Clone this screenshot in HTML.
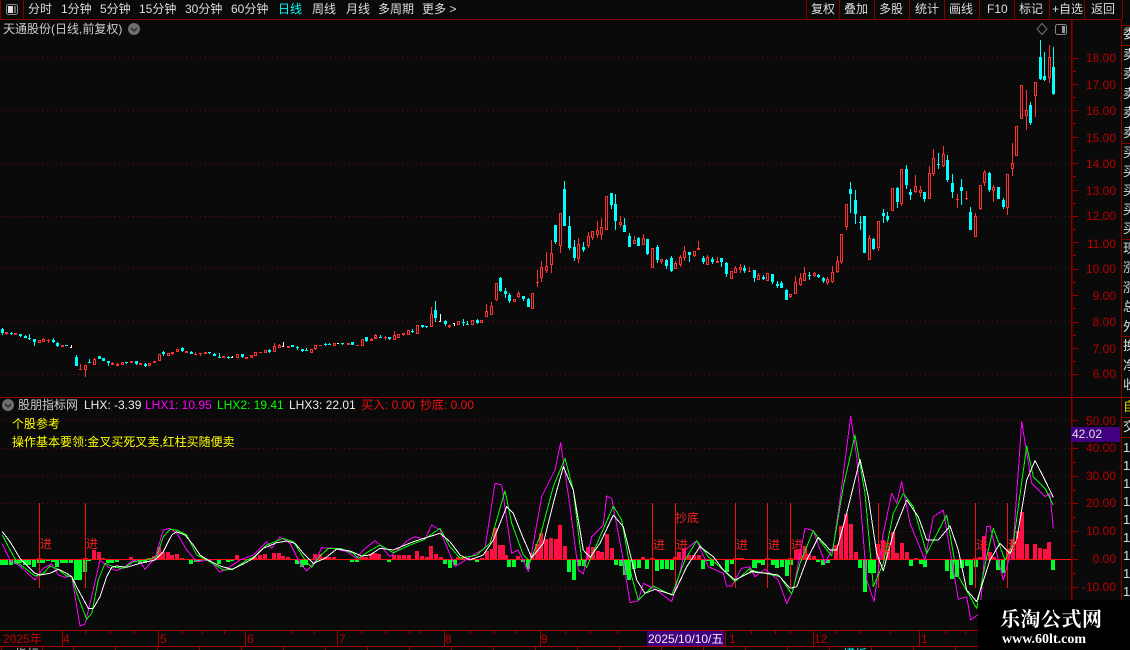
<!DOCTYPE html>
<html><head><meta charset="utf-8"><title>K线</title>
<style>
html,body{margin:0;padding:0;background:#0a0a0a;}
#p{position:relative;width:1130px;height:650px;overflow:hidden;background:#0a0a0a;font:12px/14px "Liberation Sans","WenQuanYi Zen Hei","Noto Sans CJK SC",sans-serif;color:#ddd;}
#p span{position:absolute;white-space:nowrap;}
svg{position:absolute;left:0;top:0;}
.t{top:2px;color:#ddd}
.ax{color:#b80000;right:14px;}
.m{color:#f02020;font-size:12px;}
.s{left:1123px;color:#ddd;font-size:13px;width:7px;overflow:hidden;}
</style></head><body><div id="p">
<svg id="g" width="1130" height="650" shape-rendering="crispEdges"></svg>

<span class="t" style="left:28px">分时</span><span class="t" style="left:61px">1分钟</span><span class="t" style="left:100px">5分钟</span><span class="t" style="left:139px">15分钟</span><span class="t" style="left:185px">30分钟</span><span class="t" style="left:231px">60分钟</span><span class="t" style="left:278px;color:#00ffff">日线</span><span class="t" style="left:312px">周线</span><span class="t" style="left:346px">月线</span><span class="t" style="left:378px">多周期</span><span class="t" style="left:422px">更多 &gt;</span>
<span class="t" style="left:811px">复权</span><span class="t" style="left:844px">叠加</span><span class="t" style="left:879px">多股</span><span class="t" style="left:915px">统计</span><span class="t" style="left:949px">画线</span><span class="t" style="left:987px">F10</span><span class="t" style="left:1019px">标记</span><span class="t" style="left:1052px">+自选</span><span class="t" style="left:1091px">返回</span>

<span style="left:3px;top:22px;color:#ccc">天通股份(日线,前复权)</span>

<span class="ax" style="top:51px">18.00</span><span class="ax" style="top:78px">17.00</span><span class="ax" style="top:104px">16.00</span><span class="ax" style="top:131px">15.00</span><span class="ax" style="top:157px">14.00</span><span class="ax" style="top:184px">13.00</span><span class="ax" style="top:209px">12.00</span><span class="ax" style="top:237px">11.00</span><span class="ax" style="top:262px">10.00</span><span class="ax" style="top:289px">9.00</span><span class="ax" style="top:315px">8.00</span><span class="ax" style="top:342px">7.00</span><span class="ax" style="top:367px">6.00</span>
<span class="ax" style="top:414px">50.00</span><span class="ax" style="top:441px">40.00</span><span class="ax" style="top:469px">30.00</span><span class="ax" style="top:496px">20.00</span><span class="ax" style="top:524px">10.00</span><span class="ax" style="top:552px">0.00</span><span class="ax" style="top:580px">-10.00</span>
<span style="left:1072px;top:427px;color:#ddd">42.02</span>

<span style="left:18px;top:398px;color:#ccc">股朋指标网</span><span style="left:84px;top:398px;color:#eee">LHX: -3.39</span><span style="left:145px;top:398px;color:#ff00ff">LHX1: 10.95</span><span style="left:217px;top:398px;color:#00ff00">LHX2: 19.41</span><span style="left:289px;top:398px;color:#eee">LHX3: 22.01</span><span style="left:361px;top:398px;color:#f01010">买入: 0.00</span><span style="left:420px;top:398px;color:#f01010">抄底: 0.00</span>
<span style="left:12px;top:417px;color:#ffff00">个股参考</span><span style="left:12px;top:435px;color:#ffff00">操作基本要领:金叉买死叉卖,红柱买随便卖</span>

<span class="m" style="left:40px;top:537px">进</span><span class="m" style="left:86px;top:537px">进</span><span class="m" style="left:653px;top:538px">进</span><span class="m" style="left:676px;top:538px">进</span><span class="m" style="left:736px;top:538px">进</span><span class="m" style="left:768px;top:538px">进</span><span class="m" style="left:791px;top:538px">进</span><span class="m" style="left:879px;top:540px">进</span><span class="m" style="left:976px;top:538px">进</span><span class="m" style="left:1008px;top:538px">进</span><span class="m" style="left:675px;top:511px">抄底</span>

<span style="left:3px;top:632px;color:#c00000">2025年</span><span style="left:63px;top:632px;color:#c00000">4</span><span style="left:160px;top:632px;color:#c00000">5</span><span style="left:247px;top:632px;color:#c00000">6</span><span style="left:339px;top:632px;color:#c00000">7</span><span style="left:445px;top:632px;color:#c00000">8</span><span style="left:541px;top:632px;color:#c00000">9</span><span style="left:729px;top:632px;color:#c00000">1</span><span style="left:814px;top:632px;color:#c00000">12</span><span style="left:921px;top:632px;color:#c00000">1</span>
<span style="left:647px;top:631px;width:77px;height:15px;background:#400080"></span><span style="left:648px;top:632px;color:#eee">2025/10/10/五</span>

<span style="left:15px;top:647px;color:#ccc">指标</span><span style="left:843px;top:647px;color:#00ffff">模板</span>

<span class="s" style="top:27px">委</span>
<span class="s" style="top:48px">卖</span><span class="s" style="top:67px">卖</span><span class="s" style="top:87px">卖</span><span class="s" style="top:106px">卖</span><span class="s" style="top:126px">卖</span>
<span class="s" style="top:146px">买</span><span class="s" style="top:165px">买</span><span class="s" style="top:184px">买</span><span class="s" style="top:203px">买</span><span class="s" style="top:222px">买</span>
<span class="s" style="top:242px">现</span><span class="s" style="top:261px">涨</span><span class="s" style="top:281px">涨</span><span class="s" style="top:300px">总</span><span class="s" style="top:320px">外</span>
<span class="s" style="top:339px">换</span><span class="s" style="top:359px">净</span><span class="s" style="top:378px">收</span>
<span class="s" style="top:400px;color:#e0d000">自</span><span class="s" style="top:420px">交</span>
<span class="s" style="top:441px">1</span><span class="s" style="top:459px">1</span><span class="s" style="top:477px">1</span><span class="s" style="top:495px">1</span><span class="s" style="top:513px">1</span><span class="s" style="top:531px">1</span><span class="s" style="top:549px">1</span><span class="s" style="top:567px">1</span><span class="s" style="top:585px">1</span>

<span style="left:978px;top:600px;width:152px;height:50px;background:#000"></span>
<span style="left:1000px;top:607px;color:#fff;font:700 20px/22px 'Noto Serif CJK SC','Liberation Serif',serif;letter-spacing:.5px">乐淘公式网</span>
<span style="left:1002px;top:632px;color:#fff;font:700 14px/15px 'Liberation Serif',serif">www.60lt.com</span>
</div>
<script>
var o=[];var BG='#0a0a0a',RD='#ff3232',CY='#00ffff',DR='#860000';
function R(x,y,w,h,c){o.push('<rect x="'+x+'" y="'+y+'" width="'+w+'" height="'+h+'" fill="'+c+'"/>');}
function D(y,x2){o.push('<line x1="2" x2="'+x2+'" y1="'+(y+.5)+'" y2="'+(y+.5)+'" stroke="#6e0c0c" stroke-dasharray="1 3.5"/>');}
[57,110,163,216,268,321,374,420,448,476,503,531,587].forEach(function(y){D(y,1070);});
function S(x0,y0,s){s.split(';').forEach(function(e){var a=e.trim().split(' ');if(a.length<4)return;var t=a[0],z=+a[1],bt=+a[2],bb=+a[3],wt=a[4]===undefined||a[4]==='-'?bt:+a[4],wb=a[5]===undefined?bb:+a[5];
var x=Math.floor(x0+z/3),Y=function(v){return Math.round(y0+v/3);};
var col=t=='r'?RD:t=='c'?CY:'#fff';var by=Y(bt),bh=Math.max(Y(bb)-by,1);
var w1=Y(wt),w2=Y(wb);if(w2>w1)R(x,w1,1,w2-w1,col);
if(t=='w'){R(x-1,by,2,1,col);return;}
R(x-1,by,3,bh,col);if(t=='r'&&bh>2)R(x,by+1,1,bh-2,BG);});}
S(0,310,"c 7 57 70 53 75;r 19 67 72 67 75;c 34 70 72 66 75;r 47 70 75;c 61 72 78 72 81;c 76 78 84 75 84;c 88 84 87 72 90;c 103 87 96 87 108;r 118 90 99;r 130 87 96 84 96;r 144 90 92 87 99;c 160 90 96 84 99;c 172 99 108 96 111;r 187 105 111;c 199 106 108;w 213 111 112 105 114;c 229 141 168 135 168;r 241 176 178 162 177;r 256 165 180 165 201;c 268 156 159 147 159;r 283 147 165 144 165;c 298 138 147;c 310 144 153;c 325 153 159 153 168;r 337 159 165 156 165;r 352 162 168 159 168;r 367 156 165;c 379 156 159 156 162;r 394 153 159;c 409 153 162 153 165;r 420 159 165;c 436 162 168 159 171;r 448 159 168;r 463 153 159;r 478 132 153;c 490 126 132 123 138;r 505 129 138;r 517 126 132 126 135;r 532 117 126;c 547 114 123 111 126;r 559 123 129;c 574 126 132 123 132;r 587 132 134 126 135;r 600 129 131 129 138;r 616 126 132;c 628 126 129 126 132;c 643 132 138 129 138;c 658 141 144 129 144;r 670 138 144;c 684 141 143 138 147;w 697 140 141 138 144;r 712 132 144;c 727 132 141 132 144;r 739 141 147;r 754 135 144;r 766 126 138;r 781 126 128;r 796 120 129;c 808 120 126 117 129;r 823 108 126 99 126;r 838 105 114 102 114;w 850 108 109 96 111;r 865 108 114;c 876 105 111;c 892 112 114 108 120;c 907 117 123 117 126;c 919 120 123 114 123;r 934 117 129;r 946 105 117 105 120;r 960 105 108;c 976 102 104 99 108;c 988 102 105 99 105;r 1003 99 108;w 1015 99 100 99 103;c 1028 99 102 99 105;r 1045 99 105;c 1057 96 105;r 1071 105 108;r 1087 87 108;c 1099 81 93 81 96;r 1114 87 93 84 93;r 1126 78 87 72 87");
S(375,295,"r 0 121 130;c 16 127 129 120 129;r 30 127 129 124 135;c 43 127 132 127 135;r 58 120 135 108 135;r 70 117 129;r 85 115 120 115 123;r 100 105 120;c 112 107 109 102 114;r 127 90 117;c 142 90 96 90 99;c 154 93 96 93 99;r 169 57 96 36 96;c 181 45 69 18 81;w 196 78 79 57 81;c 211 78 87 75 93;r 223 90 96 90 99;w 238 84 92;r 250 78 90;c 265 80 82 72 93;c 277 86 87 78 87;r 292 75 90;c 307 75 84 72 87;r 319 75 84");
S(420,170,"r 199 423 441 402 441;r 214 408 435 396 435;r 228 339 390 339 393;c 241 324 363 321 366;c 256 363 372 354 384;c 268 375 393 369 399;r 283 387 396;r 295 369 381 363 384;c 310 378 387 378 393;c 325 387 411 384 411;r 337 369 417;r 352 336 338 300 351;r 364 291 324 273 336;r 379 288 303 246 309;r 394 249 285 210 309;c 406 165 216 165 222;r 421 129 228 129 249;c 433 57 168 33 168;c 448 168 234 138 240;c 463 231 264 210 273;r 475 222 267 204 279;c 490 231 240 216 246;r 505 198 228 186 234;r 517 183 204 183 210;r 532 180 195 153 204;r 544 171 195 144 210;r 559 78 180;c 574 69 105 69 117;c 586 102 153 72 180;r 601 156 165 138 171;c 613 165 186 144 186;c 628 198 231 189 231;r 643 210 222 198 222;c 655 204 228 201 228;r 670 204 225 192 225;c 682 207 252 207 255;r 697 234 294;c 712 231 270 225 279;r 724 267 276 267 282;c 739 270 288 267 297;c 754 264 303 258 306;r 766 279 297 273 297;r 781 261 285 255 291;r 793 243 264 228 273;c 808 246 255 246 276;r 823 243 258 243 261;r 835 234 240 213 240;c 850 264 276 258 282;r 862 261 285 255 285;c 877 267 276 261 282;r 892 273 279 261 279");
S(720,130,"c 3 384 396 384 411;c 19 399 432 396 441;r 34 423 447;r 46 414 429 408 429;r 61 411 420 402 429;c 73 414 423 405 429;r 88 424 426 411 426;c 103 420 444 420 456;r 115 435 450 429 450;c 130 441 447 435 450;r 142 429 453;c 157 432 456 432 462;c 172 462 468 453 474;c 184 459 474 453 474;c 199 480 510 477 510;r 211 492 501 492 504;r 226 456 492 438 492;r 241 444 465 429 468;r 253 429 453 411 453;c 268 434 436 426 450;r 283 429 438 426 441;c 295 435 441 432 444;c 310 444 453 441 459;r 322 447 459 441 465;r 337 426 456 408 459;r 352 393 426 378 429;r 364 312 396 312 402;r 379 222 291 222 300;c 391 177 192 156 249;c 406 210 252 180 282;c 421 276 278 258 300;c 433 258 369;r 448 324 390 315 390;c 460 327 357 324 360;r 475 273 354 273 363;c 490 249 258 237 279;c 502 258 270 246 276;r 517 174 243;c 532 174 216 171 234;r 544 117 222 117 228;c 559 117 165 105 177;c 571 186 195 177 210;r 586 168 186 135 189;r 601 180 189 168 201;c 613 186 207 186 216;r 628 129 207 108 207;r 640 84 132 57 138;c 655 101 103 69 117;r 670 72 108 48 111;c 682 90 150 75 156;c 697 159 186 132 204;r 712 207 209 192 234;c 724 171 183 147 225;r 739 203 205 183 210;c 751 246 300 231 300;r 766 258 321 249 321;r 781 165 237 165 240;r 793 126 159 120 168;c 808 129 180 126 186;r 820 171 183 165 216;c 835 171 207;c 850 210 231 204 237");
S(980,30,"r 82 432 534 432 555;r 97 399 417 339 438;r 109 288 378;r 124 165 267;r 139 240 258 180 300;c 151 225 279 216 285;r 166 156 198 156 261;c 181 81 147 30 150;c 193 138 150 66 153;r 208 81 144 45 159;c 220 111 192 51 195");

function H(x0,s){s.split(' ').forEach(function(e){var a=e.split(':'),z=+a[0],v=+a[1];var x=Math.round(x0+z/3-2),c=v>0?'#ff1044':'#00ff2a';if(v>0)R(x,559-v,4,v,c);else R(x,560,4,-v,c);});}
H(0,"7:-5 19:-5 34:-5 47:-4 61:-3 76:-5 88:-5 103:-7 118:-3 130:-3 144:-1 160:-2 172:-7 187:-3 199:-3 213:-3 229:-20 241:-20 256:-12 268:-1 283:9 298:7 310:1 325:-3 337:-3 352:-2 394:2 420:-3 436:-3 448:1 463:3 478:12 490:7 505:7 517:4 532:5 547:1 574:-4 587:-2 600:-1 616:1 658:-4 684:-2 697:-1 712:4 754:1 766:2 781:4 796:5 823:6 838:6 850:3 865:2 892:-4 907:-7 919:-5 946:5 960:5 976:2 988:2 1003:2 1057:-2 1071:-2 1087:2 1099:2 1114:5 1126:6 1138:5");
H(380,"28:-2 43:4 58:4 73:4 88:4 112:8 127:3 142:2 154:13 168:5 183:2 196:-4 210:-8 225:-5 235:2 250:2 265:1 280:1 292:-2 305:1 320:8 335:10 345:31 360:14 370:14 378:4 388:-7 403:-7 415:3 430:-2 445:-9 455:6 470:15 484:26 498:20 512:21 527:20 540:34 555:13 568:-12 583:-20 597:-6 612:-6 625:12 640:12 653:8 667:7 680:25 695:11 707:-5 722:-6 735:-15");
H(380,"748:-20 762:-9 776:-8 790:2 802:-9 815:1 830:-11 845:-9 860:-9 875:-10 885:2 898:7 913:11 928:4 942:4 957:4 970:-9 985:-1 997:-6 1040:-12 1055:-4 1075:1 1085:1 1125:-8 1137:-3");
H(750,"13:-8 28:-3 40:-5 68:-5 82:-8 95:-7 110:-16 123:-5 137:9 150:10 165:13 178:5 192:3 205:-2 220:-5 233:-3 258:14 272:33 288:45 302:35 317:7 331:-8 345:-32 360:-13 373:-13 385:15 400:19 413:9 428:27 440:6 455:16 470:7 482:-6 497:1 512:-4 525:-7 590:-11 605:-19 622:-17 637:-8 650:-6 662:-25 677:-7 690:2 703:23 720:7 733:2 745:-10 760:-13 775:10 790:20 803:28 815:47 830:15 855:15 870:11 885:10 898:17 910:-10");
R(0,559,1071,1,'#ff1010');
[39,85,652,675,735,767,790,878,975,1007].forEach(function(x){R(x,503,1,85,'#f01010');R(x-2,558,5,1,'#f01010');R(x-3,559,7,1,'#f01010');});

function P(col,a,b,c){var p=[];function add(x0,s){s.split(' ').forEach(function(e){var q=e.split(',');p.push((x0+q[0]/3).toFixed(1)+','+(+(x0==0?480:x0==380?420:400)+q[1]/3).toFixed(1));});}
add(0,a);add(380,b);add(750,c);o.push('<polyline fill="none" stroke="'+col+'" stroke-width="1" stroke-linejoin="round" points="'+p.join(' ')+'"/>');}
P('#ff00ff',"7,192 30,240 60,258 105,300 130,265 155,252 175,285 195,292 215,288 240,438 255,432 275,350 300,240 325,262 350,272 375,260 400,240 420,245 435,268 450,250 465,235 490,150 510,145 530,158 560,210 590,245 630,240 660,277 690,260 720,240 760,225 800,185 815,205 840,170 870,190 900,250 920,273 945,245 965,203 1000,205 1040,215 1070,235 1090,210 1125,182 1140,195",
"30,410 85,360 105,350 135,358 155,315 180,330 225,440 280,405 315,385 345,190 365,195 395,400 415,390 445,455 485,230 525,150 542,68 570,260 595,450 610,462 635,350 670,315 680,228 695,235 730,420 750,548 775,542 790,490 830,510 875,545 900,455 915,390 950,362 985,440 1030,460 1040,498 1055,498 1085,445 1110,440",
"15,530 45,508 85,540 110,610 130,570 165,385 190,392 225,490 250,440 270,300 302,48 320,170 350,540 372,605 400,400 425,280 440,310 455,245 480,370 525,480 550,350 580,330 625,598 650,590 662,660 690,640 710,380 720,378 760,540 790,430 815,65 845,250 885,290 900,280 910,385");
P('#00ff00',"7,165 25,200 50,245 105,288 130,280 150,258 175,268 200,288 215,290 230,340 260,418 275,400 295,300 315,250 345,262 370,265 400,245 440,240 470,230 490,170 510,148 530,150 560,165 590,225 620,240 670,270 700,268 740,240 760,232 800,195 850,175 880,185 915,240 935,262 960,228 985,205 1020,205 1060,220 1075,235 1110,212 1140,195",
"40,398 90,375 130,360 180,325 210,380 240,415 290,405 330,370 375,212 395,310 430,405 450,425 480,350 520,200 555,115 580,210 605,420 620,442 660,350 700,258 725,300 755,470 775,540 820,498 875,525 915,420 950,362 985,410 1030,450 1065,485 1110,445",
"0,510 45,520 90,530 125,582 150,490 190,392 215,430 245,468 280,260 315,105 345,280 370,560 400,490 430,340 460,280 490,320 530,460 590,345 620,520 680,625 710,470 730,385 765,480 790,430 830,138 850,230 885,265 910,315");
P('#ffffff',"7,155 30,185 60,235 105,280 120,285 150,280 175,268 200,280 215,290 235,330 265,385 280,385 300,350 320,290 335,262 350,258 380,262 420,250 465,240 490,215 515,165 530,155 555,165 580,195 600,225 620,238 660,258 695,268 730,252 760,235 790,205 830,188 860,183 885,190 910,220 940,250 975,235 1010,207 1050,213 1085,228 1110,225 1140,205",
"40,390 100,365 180,340 210,365 240,405 270,420 310,405 340,360 380,260 400,280 430,355 455,413 490,370 520,250 550,140 580,210 610,390 630,412 660,370 700,285 730,320 770,480 795,520 825,508 880,525 920,440 960,380 1000,410 1030,450 1065,480 1120,452",
"0,515 50,520 85,525 120,565 140,560 170,480 205,412 240,450 260,450 290,340 330,178 355,290 380,460 400,512 430,400 470,300 505,350 530,420 565,420 600,378 625,450 650,570 680,605 720,480 750,430 780,460 800,420 830,240 855,182 880,230 910,292");

// frame
R(0,19,1122,1,DR);R(0,0,1,19,DR);R(23,0,1,19,DR);R(0,397,1122,1,'#a00000');
R(1071,20,1,610,DR);R(1072,20,1,610,'#5a0000');R(1121,19,1,631,DR);
R(0,630,1121,1,'#a00000');R(0,646,1130,1,'#a00000');
[806,839,874,909,944,979,1014,1049,1084,1122].forEach(function(x){R(x,0,1,19,DR);});
[25,45,143,239,336,397,417,437].forEach(function(y){R(1122,y,8,1,DR);});
// axis ticks
for(var v=57.5,i=0;i<=12;i++){var y=Math.round(57.5+i*26.4);R(1073,y,5,1,'#a00000');if(i<12)R(1073,y+13,3,1,'#a00000');}
[420,448,476,503,531,559,587].forEach(function(y){R(1073,y,5,1,'#a00000');if(y<587)R(1073,y+14,3,1,'#a00000');});
R(1071,427,49,15,'#400080');
// time axis
[62,158,245,337,444,540,725,813,919].forEach(function(x){R(x,631,1,15,'#a00000');});
[85,110,134,182,202,224,291,314,361,385,409,420,470,494,516,565,590,617,751,775,790,835,860,890,945,965,1000,1040,1060].forEach(function(x){if(x<978)R(x,631,1,3,'#a00000');});
[1,42,73,115,157,199,241,283,325,367,409,451,493,535,577,619,661,703,745,787,829,871,913,955].forEach(function(x){R(x,647,1,3,'#a00000');});
// icons
function ic(x,y,w){o.push('<rect x="'+x+'.5" y="'+y+'.5" width="'+w+'" height="10" rx="2" fill="none" stroke="#888" shape-rendering="auto"/>');}
ic(6,4,11);R(8,6,5,7,'#ddd');R(14,6,2,7,'#666');
ic(1055,24,11);R(1062,26,3,7,'#999');
o.push('<path d="M1042 23.5L1047 29L1042 34.5L1037 29Z" fill="none" stroke="#777" shape-rendering="auto"/>');
function chev(cx,cy){o.push('<circle cx="'+cx+'" cy="'+cy+'" r="6" fill="#6e6e6e" shape-rendering="auto"/><path d="M'+(cx-3)+' '+(cy-1)+'L'+cx+' '+(cy+2)+'L'+(cx+3)+' '+(cy-1)+'" fill="none" stroke="#222" stroke-width="1.3" shape-rendering="auto"/>');}
chev(134,29);chev(8,405);
document.getElementById('g').innerHTML=o.join('');
</script></body></html>
